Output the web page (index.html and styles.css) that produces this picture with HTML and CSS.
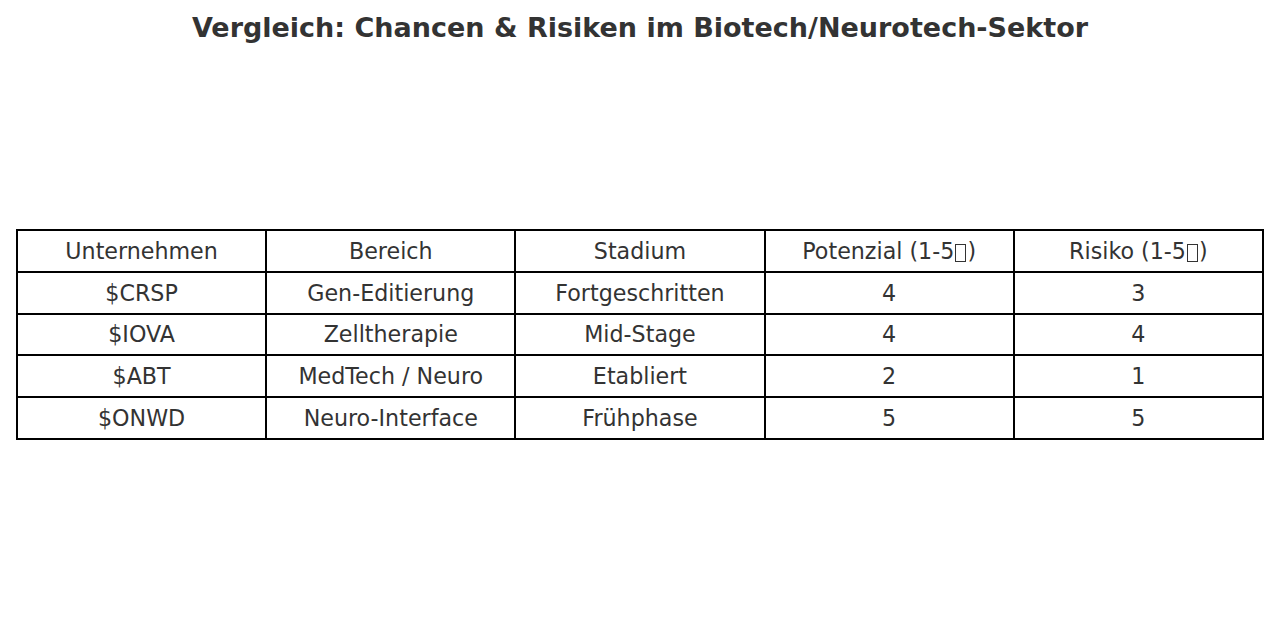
FILE: index.html
```html
<!DOCTYPE html>
<html lang="de">
<head>
<meta charset="utf-8">
<title>Vergleich</title>
<link rel="stylesheet" href="styles.css">
</head>
<body>
<div class="page">
  <h1 class="title">Vergleich: Chancen &amp; Risiken im Biotech/Neurotech-Sektor</h1>
  <table class="grid">
    <tr><td>Unternehmen</td><td>Bereich</td><td>Stadium</td><td>Potenzial (1-5<span class="tofu"></span>)</td><td>Risiko (1-5<span class="tofu"></span>)</td></tr>
    <tr><td>$CRSP</td><td>Gen-Editierung</td><td>Fortgeschritten</td><td>4</td><td>3</td></tr>
    <tr><td>$IOVA</td><td>Zelltherapie</td><td>Mid-Stage</td><td>4</td><td>4</td></tr>
    <tr><td>$ABT</td><td>MedTech / Neuro</td><td>Etabliert</td><td>2</td><td>1</td></tr>
    <tr><td>$ONWD</td><td>Neuro-Interface</td><td>Frühphase</td><td>5</td><td>5</td></tr>
  </table>
</div>
</body>
</html>
```

FILE: styles.css
```css
html, body {
  margin: 0;
  padding: 0;
  background: #ffffff;
}
.page {
  width: 1280px;
  height: 627px;
  display: flex;
  flex-direction: column;
  align-items: center;
  font-family: "DejaVu Sans", sans-serif;
  color: #333333;
}
.title {
  margin: 10px 0 0 0;
  font-size: 27px;
  line-height: 35px;
  font-weight: bold;
  color: #333333;
}
.grid {
  margin-top: 184px;
  width: 1248px;
  border-collapse: collapse;
  table-layout: fixed;
}
.grid td {
  border: 2px solid #000000;
  height: 39.8px;
  padding: 0;
  text-align: center;
  font-size: 22.2px;
  line-height: 26px;
  color: #333333;
}
.tofu {
  display: inline-block;
  width: 11px;
  height: 18px;
  border: 1px solid #333333;
  box-sizing: border-box;
  margin: 0 1px;
  vertical-align: -3px;
}
```
